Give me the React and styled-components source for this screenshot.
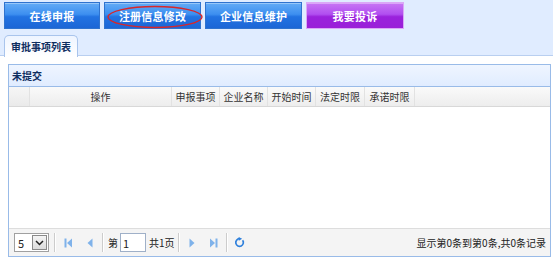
import React from "react";
import styled, { createGlobalStyle } from "styled-components";

const Global = createGlobalStyle`
  html, body { margin: 0; padding: 0; background: #fff; }
  body { font-family: "Noto Sans CJK SC", "Liberation Sans", sans-serif; }
  * { box-sizing: border-box; }
`;

const Page = styled.div`
  width: 553px;
  height: 259px;
  display: flex;
  flex-direction: column;
  overflow: hidden;
`;

const TopBand = styled.div`
  background: #e0ecff;
  border-bottom: 1px solid #b9cff0;
  height: 56px;
  display: flex;
  flex-direction: column;
  padding: 2px 0 0 4px;
`;

const ButtonRow = styled.div`
  position: relative;
  display: flex;
  gap: 4px;
`;

const NavButton = styled.div`
  width: ${(p) => p.$w}px;
  height: 27px;
  display: flex;
  align-items: center;
  justify-content: center;
  color: #fff;
  font-weight: bold;
  font-size: 11px;
  letter-spacing: 0.2px;
  border: 1px solid ${(p) => (p.$purple ? "#dba8f6" : "#2f73cf")};
  background: ${(p) =>
    p.$purple
      ? "linear-gradient(#c877f4 0%, #b14ff0 45%, #9a22dc 55%, #9a1fd8 100%)"
      : "linear-gradient(#63abf6 0%, #3d8ff0 45%, #2273e2 55%, #1c66d6 100%)"};
  box-shadow: inset 0 1px 0 rgba(255, 255, 255, 0.35);
`;

const Ring = styled.svg`
  position: absolute;
  left: 101px;
  top: 2px;
  pointer-events: none;
`;

const TabStrip = styled.div`
  display: flex;
  margin-top: 6px;
  flex: 1;
  align-items: flex-end;
`;

const Tab = styled.div`
  width: 74px;
  height: 22px;
  margin-bottom: -1px;
  border: 1px solid #a9c4ec;
  border-bottom: none;
  border-radius: 5px 5px 0 0;
  background: linear-gradient(#eef4ff, #ffffff);
  display: flex;
  align-items: center;
  justify-content: center;
  font-size: 10px;
  font-weight: bold;
  color: #0e2d5f;
`;

const Content = styled.div`
  flex: 1;
  padding: 8px 2px 2px 8px;
  display: flex;
`;

const Panel = styled.div`
  flex: 1;
  border: 1px solid #99bbe8;
  display: flex;
  flex-direction: column;
`;

const PanelHeader = styled.div`
  height: 22px;
  background: linear-gradient(#eff5ff, #e0ecff);
  border-bottom: 1px solid #99bbe8;
  display: flex;
  align-items: center;
  padding-left: 3px;
  font-size: 10px;
  font-weight: bold;
  color: #0e2d5f;
`;

const HeadRow = styled.div`
  height: 20px;
  display: flex;
  background: linear-gradient(#fafafa, #ededed);
  border-bottom: 1px solid #d8d8d8;
`;

const HeadCell = styled.div`
  width: ${(p) => p.$w}px;
  flex: ${(p) => (p.$w ? "none" : 1)};
  display: flex;
  align-items: center;
  justify-content: center;
  font-size: 10px;
  color: #333;
  border-right: ${(p) => (p.$last ? "none" : "1px solid #e2e2e2")};
  background: ${(p) => (p.$rn ? "linear-gradient(#f6f6f6,#eaeaea)" : "transparent")};
`;

const Body = styled.div`
  flex: 1;
  background: #fff;
`;

const Pager = styled.div`
  height: 28px;
  background: #f4f4f4;
  border-top: 1px solid #dddddd;
  display: flex;
  align-items: center;
  padding: 0 4px 0 5px;
  font-size: 10px;
  color: #222;
`;

const Select = styled.div`
  width: 35px;
  height: 19px;
  border: 1px solid #a0a0a0;
  background: #fff;
  display: flex;
  align-items: center;
  justify-content: space-between;
  padding: 1px;
  font-size: 11px;
  padding-left: 3px;
`;

const SelectArrow = styled.div`
  width: 15px;
  height: 15px;
  border: 1px solid #8a8a8a;
  background: linear-gradient(#f4f4f4, #dcdcdc);
  display: flex;
  align-items: center;
  justify-content: center;
`;

const Sep = styled.div`
  width: 2px;
  height: 19px;
  border-left: 1px solid #cccccc;
  border-right: 1px solid #ffffff;
  margin: 0 ${(p) => p.$r}px 0 ${(p) => p.$l}px;
`;

const IconBtn = styled.div`
  width: ${(p) => p.$w || 21}px;
  height: 19px;
  display: flex;
  align-items: center;
  justify-content: center;
`;

const PageInput = styled.div`
  width: 26px;
  height: 19px;
  border: 1px solid #9fb0c8;
  background: #fff;
  margin: 0 3px 0 2px;
  font-size: 11px;
  display: flex;
  align-items: center;
  padding-left: 2px;
`;

const Info = styled.div`
  margin-left: auto;
  font-size: 10px;
  color: #222;
`;

const ICON = "#7fb2ea";

function First() {
  return (
    <svg width="9" height="10" viewBox="0 0 9 10">
      <rect x="0.5" y="0.5" width="2" height="9" fill={ICON} />
      <path d="M8 0.5 L3 5 L8 9.5 Z" fill={ICON} />
    </svg>
  );
}
function Prev() {
  return (
    <svg width="6" height="10" viewBox="0 0 6 10">
      <path d="M5.5 0.5 L0.5 5 L5.5 9.5 Z" fill={ICON} />
    </svg>
  );
}
function Next() {
  return (
    <svg width="6" height="10" viewBox="0 0 6 10">
      <path d="M0.5 0.5 L5.5 5 L0.5 9.5 Z" fill={ICON} />
    </svg>
  );
}
function Last() {
  return (
    <svg width="9" height="10" viewBox="0 0 9 10">
      <path d="M1 0.5 L6 5 L1 9.5 Z" fill={ICON} />
      <rect x="6.5" y="0.5" width="2" height="9" fill={ICON} />
    </svg>
  );
}
function Refresh() {
  return (
    <svg width="11" height="11" viewBox="0 0 11 11">
      <path
        d="M8.6 3.2 A3.8 3.8 0 1 1 5.5 1.7"
        fill="none"
        stroke="#2f80dc"
        strokeWidth="1.7"
      />
      <path d="M4.6 0 L8.2 1.8 L4.8 3.8 Z" fill="#2f80dc" />
    </svg>
  );
}

const columns = [
  { label: "", w: 21, rn: true },
  { label: "操作", w: 142 },
  { label: "申报事项", w: 48 },
  { label: "企业名称", w: 48 },
  { label: "开始时间", w: 48 },
  { label: "法定时限", w: 49 },
  { label: "承诺时限", w: 50 },
];

export default function App() {
  return (
    <>
      <Global />
      <Page>
        <TopBand>
          <ButtonRow>
            <NavButton $w={96}>在线申报</NavButton>
            <NavButton $w={97}>注册信息修改</NavButton>
            <NavButton $w={97}>企业信息维护</NavButton>
            <NavButton $w={98} $purple>
              我要投诉
            </NavButton>
            <Ring width="100" height="26" viewBox="0 0 100 26">
              <ellipse
                cx="50"
                cy="13"
                rx="47"
                ry="10.5"
                fill="none"
                stroke="#d8262a"
                strokeWidth="1.4"
              />
            </Ring>
          </ButtonRow>
          <TabStrip>
            <Tab>审批事项列表</Tab>
          </TabStrip>
        </TopBand>
        <Content>
          <Panel>
            <PanelHeader>未提交</PanelHeader>
            <HeadRow>
              {columns.map((c, i) => (
                <HeadCell key={i} $w={c.w} $rn={c.rn}>
                  {c.label}
                </HeadCell>
              ))}
              <HeadCell $last />
            </HeadRow>
            <Body />
            <Pager>
              <Select>
                5
                <SelectArrow>
                  <svg width="9" height="6" viewBox="0 0 9 6">
                    <path d="M1 1 L4.5 4.5 L8 1" fill="none" stroke="#222" strokeWidth="1.5" />
                  </svg>
                </SelectArrow>
              </Select>
              <Sep $l={5} $r={2} />
              <IconBtn>
                <First />
              </IconBtn>
              <IconBtn>
                <Prev />
              </IconBtn>
              <Sep $l={2} $r={4} />
              <span>第</span>
              <PageInput>1</PageInput>
              <span>共1页</span>
              <Sep $l={3} $r={2} />
              <IconBtn>
                <Next />
              </IconBtn>
              <IconBtn>
                <Last />
              </IconBtn>
              <Sep $l={2} $r={4} />
              <IconBtn $w={16}>
                <Refresh />
              </IconBtn>
              <Info>显示第0条到第0条,共0条记录</Info>
            </Pager>
          </Panel>
        </Content>
      </Page>
    </>
  );
}
